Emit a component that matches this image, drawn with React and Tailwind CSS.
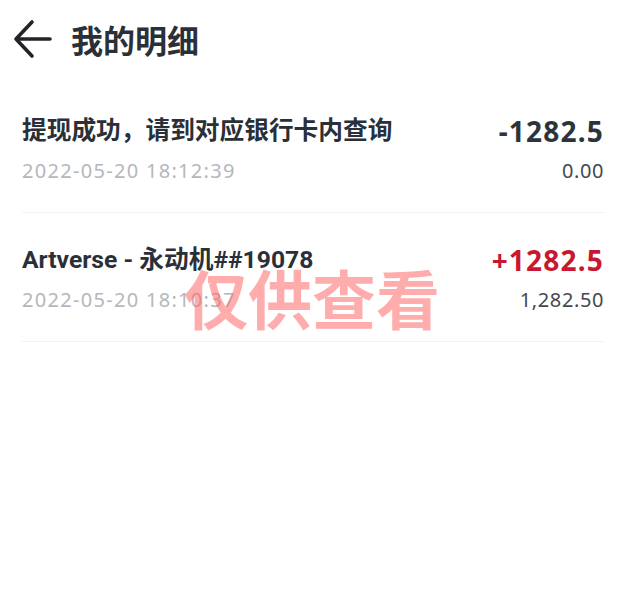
import React from 'react';

const rows = [
  {
    title: '提现成功，请到对应银行卡内查询',
    date: '2022-05-20 18:12:39',
    amount: '-1282.5',
    sub: '0.00',
    income: false,
  },
  {
    title: 'Artverse - 永动机##19078',
    date: '2022-05-20 18:10:37',
    amount: '+1282.5',
    sub: '1,282.50',
    income: true,
  },
];

export default function App() {
  return (
    <div
      className="relative w-[620px] h-[600px] bg-white overflow-hidden"
      style={{ fontFamily: '"Noto Sans", "Noto Sans CJK SC", sans-serif' }}
    >
      <div className="flex items-center h-[78px] pl-[13px]">
        <svg width="40" height="40" viewBox="0 0 40 40" fill="none" className="shrink-0">
          <path
            d="M3 20 H37 M19 3 L3 20 L19 37"
            stroke="#222428"
            strokeWidth="3.6"
            strokeLinecap="round"
            strokeLinejoin="round"
          />
        </svg>
        <h1
          className="ml-[18px] text-[32px] font-bold text-[#2b3038] leading-none"
          style={{ fontFamily: '"Noto Sans CJK SC", sans-serif' }}
        >
          我的明细
        </h1>
      </div>

      <div className="pl-[22px] pr-[16px] pt-[6px]">
        {rows.map((r) => (
          <div key={r.date} className="flex justify-between pt-[31px] pb-[27px] border-b border-[#f3f3f3]">
            <div className="flex flex-col">
              <div
                className="text-[24.7px] leading-[32px] font-bold text-[#2b3038]"
                style={{ fontFamily: 'Roboto, "Noto Sans CJK SC", sans-serif' }}
              >
                {r.title}
              </div>
              <div className="mt-[10px] text-[20px] leading-[28px] tracking-[1.3px] text-[#b3b8bd]">{r.date}</div>
            </div>
            <div className="flex flex-col items-end">
              <div
                className={`text-[28px] leading-[32px] font-bold tracking-[1.2px] ${r.income ? 'text-[#c8172e]' : 'text-[#2d333b]'}`}
              >
                {r.amount}
              </div>
              <div className="mt-[10px] text-[20px] leading-[28px] tracking-[0.6px] text-[#45484c]">{r.sub}</div>
            </div>
          </div>
        ))}
      </div>

      <div
        className="absolute left-[184px] top-[264px] text-[64px] leading-none font-bold text-[#ff6a6a] opacity-55 pointer-events-none"
        style={{ fontFamily: '"Noto Sans CJK SC", sans-serif' }}
      >
        仅供查看
      </div>
    </div>
  );
}
